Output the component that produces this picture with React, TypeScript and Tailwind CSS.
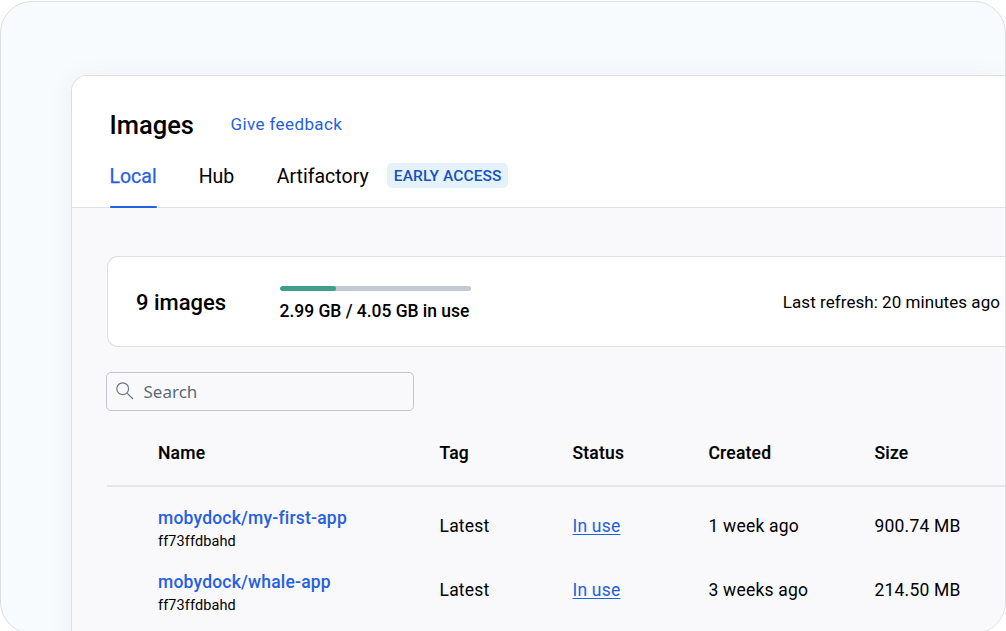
const rows = [
  { name: "mobydock/my-first-app", id: "ff73ffdbahd", tag: "Latest", status: "In use", created: "1 week ago", size: "900.74 MB" },
  { name: "mobydock/whale-app", id: "ff73ffdbahd", tag: "Latest", status: "In use", created: "3 weeks ago", size: "214.50 MB" },
];

const columns = "grid grid-cols-[281.5px_133px_136px_166px_1fr] pl-[51px]";

function Header() {
  return (
    <header className="h-[132px] border-b border-[#e0e2e6] bg-white pl-[37.5px]">
      <div className="flex h-[72px] items-end gap-[36.5px]">
        <h1 className="text-[25.5px] leading-[45px] font-medium">Images</h1>
        <a className="text-[17px] leading-[47px] tracking-[0.4px] text-[#2560e0]">Give feedback</a>
      </div>
      <nav className="flex h-[60px] text-[19.5px] leading-[57px]">
        <span className="relative mr-[42px] text-[#2560e0] [-webkit-text-stroke:0.25px_#2560e0]">
          Local
          <span className="absolute bottom-0 left-[0.5px] h-[2.5px] w-[46.5px] rounded-full bg-[#2560e0]" />
        </span>
        <span className="mr-[42.5px]">Hub</span>
        <span className="mr-[18.5px]">Artifactory</span>
        <span className="mt-[15px] h-[25px] w-[121px] rounded-[5px] bg-[#e5f2fc] text-center text-[15.5px] leading-[26px] font-medium tracking-[0.1px] text-[#1354ba]">
          EARLY ACCESS
        </span>
      </nav>
    </header>
  );
}

function Summary() {
  return (
    <section className="ml-[35px] flex h-[91px] items-center rounded-l-[11px] border border-r-0 border-[#dfdfe3] bg-white pr-[5px] pl-[28px]">
      <h2 className="w-[144px] pt-[3px] text-[22px] leading-[90px] font-medium">9 images</h2>
      <div className="w-[191px] pt-1.5">
        <div className="h-[5px] overflow-hidden rounded-full bg-[#c3c8d3]">
          <div className="h-full w-[56px] rounded-full bg-[#3f9f89]" />
        </div>
        <p className="mt-2 -ml-[0.5px] whitespace-nowrap text-[17.5px] leading-6 font-medium tracking-[-0.03px]">
          2.99 GB / 4.05 GB in use
        </p>
      </div>
      <p className="ml-auto pt-px text-[17px] leading-6 tracking-[0.05px] whitespace-nowrap">Last refresh: 20 minutes ago</p>
    </section>
  );
}

function Search() {
  return (
    <div className="mt-[25px] ml-[34px] flex h-[39px] w-[308px] items-center rounded-[5px] border-[1.5px] border-[#c4c4d0] pl-[9px] font-['Noto_Sans',sans-serif] text-[#5d6b75]">
      <svg width="19" height="19" viewBox="0 0 19 19" fill="none" stroke="#6d7a84" strokeWidth="1.2">
        <circle cx="6.7" cy="6.7" r="5.9" />
        <path d="M10.9 10.9 17 17" />
      </svg>
      <span className="ml-[8.5px] text-[17px] leading-6">Search</span>
    </div>
  );
}

function ImageTable() {
  return (
    <div className="ml-[35px] text-[17.5px] tracking-[0.2px]">
      <div className={`${columns} h-[76px] border-b-2 border-[#e7e7ea] pt-[30px] leading-6 font-medium [-webkit-text-stroke:0.15px_#000]`}>
        <span>Name</span>
        <span>Tag</span>
        <span>Status</span>
        <span>Created</span>
        <span>Size</span>
      </div>
      <div className="pt-[18px]">
        {rows.map((row) => (
          <div key={row.name} className={`${columns} h-[63.5px] leading-[43px]`}>
            <div className="pt-px">
              <a className="block text-[17.5px] leading-[25px] font-medium text-[#2560e0]">{row.name}</a>
              <span className="block text-[14.5px] leading-[22px] tracking-[0.1px]">{row.id}</span>
            </div>
            <span>{row.tag}</span>
            <span className="text-[#2560e0] underline decoration-1 underline-offset-2">{row.status}</span>
            <span>{row.created}</span>
            <span>{row.size}</span>
          </div>
        ))}
      </div>
    </div>
  );
}

export default function App() {
  return (
    <div className="h-[631px] w-[1006px] overflow-hidden bg-white pt-px font-['Roboto',sans-serif] text-black">
      <div className="h-[633px] overflow-hidden rounded-[32px] border border-[#dcdfe2] bg-[#f7fbfe]">
        <main className="mt-[73px] ml-[70px] h-[600px] rounded-tl-[16px] border-t border-l border-[#dcdfe2] bg-[#f9f9fb] shadow-[0_2px_28px_rgba(60,70,80,0.06)]">
          <div className="overflow-hidden rounded-tl-[15px]">
            <Header />
          </div>
          <div className="pt-12">
            <Summary />
            <Search />
            <ImageTable />
          </div>
        </main>
      </div>
    </div>
  );
}
